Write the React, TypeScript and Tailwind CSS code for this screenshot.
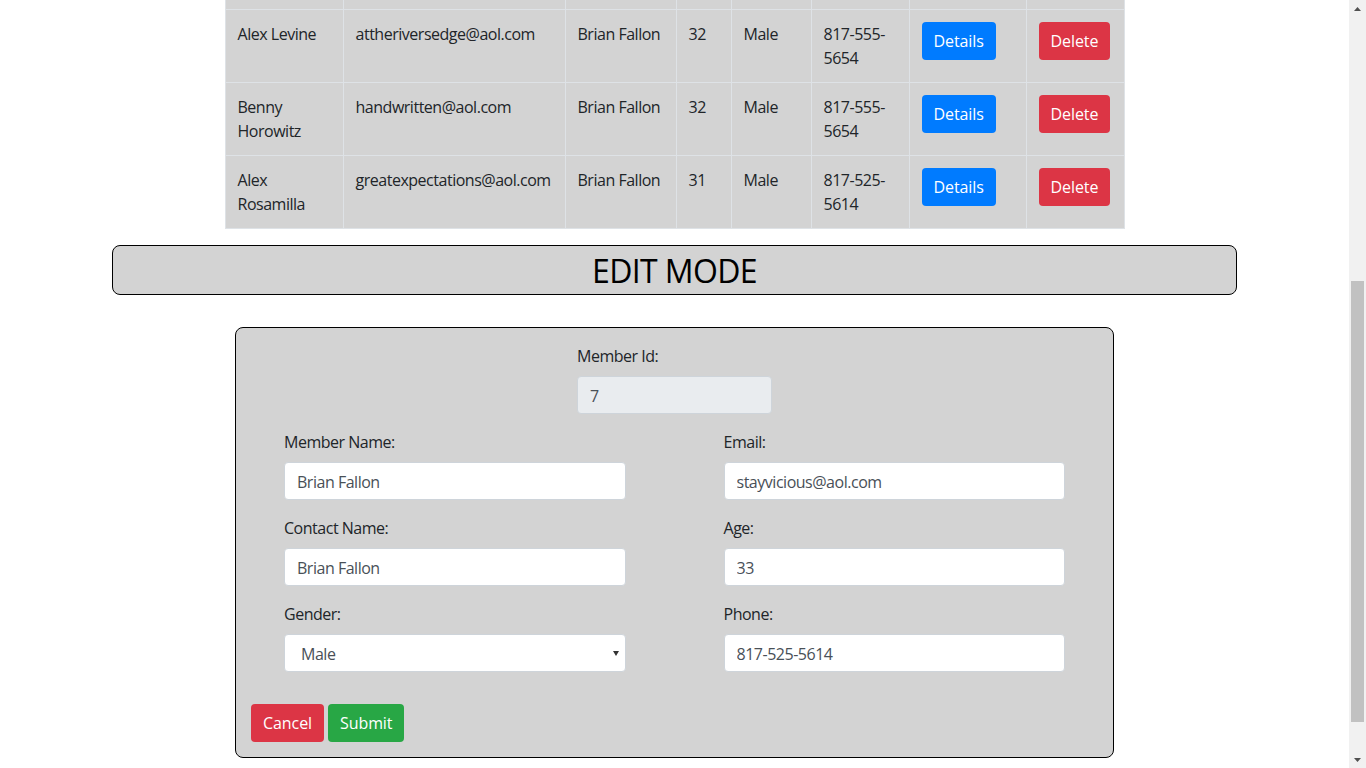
import { useLayoutEffect, useRef } from 'react';

interface Member {
  id: number;
  name: string;
  email: string;
  contact: string;
  age: number;
  gender: string;
  phone: string;
}

const members: Member[] = [
  { id: 1, name: 'Brian Fallon', email: 'stayvicious@aol.com', contact: 'Brian Fallon', age: 33, gender: 'Male', phone: '817-525-5614' },
  { id: 2, name: 'Ian Perkins', email: 'fiftyfive@aol.com', contact: 'Brian Fallon', age: 34, gender: 'Male', phone: '817-555-5614' },
  { id: 3, name: 'Jared Hart', email: 'sinkorswim@aol.com', contact: 'Brian Fallon', age: 31, gender: 'Male', phone: '817-555-5600' },
  { id: 4, name: 'Tony Perkins', email: 'cassidy@aol.com', contact: 'Brian Fallon', age: 30, gender: 'Male', phone: '817-525-5654' },
  { id: 5, name: 'Alex Levine', email: 'attheriversedge@aol.com', contact: 'Brian Fallon', age: 32, gender: 'Male', phone: '817-555-5654' },
  { id: 6, name: 'Benny Horowitz', email: 'handwritten@aol.com', contact: 'Brian Fallon', age: 32, gender: 'Male', phone: '817-555-5654' },
  { id: 7, name: 'Alex Rosamilla', email: 'greatexpectations@aol.com', contact: 'Brian Fallon', age: 31, gender: 'Male', phone: '817-525-5614' },
];

const cell = 'border border-[#dee2e6] p-3 align-top';
const control =
  'block h-[38px] w-full rounded-[4px] border border-[#ced4da] px-3 pt-px text-base tracking-[-0.03em] text-[#495057] outline-none';
const btn = 'h-[38px] rounded-[4px] px-3 tracking-[-0.005em] text-white';

const Field = ({ label, value }: { label: string; value: string }) => (
  <div className="mb-4">
    <label className="mb-2 block">{label}</label>
    <input className={`${control} bg-white`} defaultValue={value} />
  </div>
);

// windows-style scrollbar, drawn since the headless page hides the real one
const ScrollBar = () => (
  <div className="flex w-[17px] shrink-0 flex-col bg-[#f1f1f1]">
    <div className="flex h-[17px] items-center justify-center">
      <svg width="7" height="4" viewBox="0 0 7 4">
        <path d="M0 4L3.5 0 7 4z" fill="#505050" />
      </svg>
    </div>
    <div className="flex-1 px-[2px]">
      <div className="mt-[264px] h-[441px] bg-[#c1c1c1]" />
    </div>
    <div className="flex h-[17px] items-center justify-center">
      <svg width="7" height="4" viewBox="0 0 7 4">
        <path d="M0 0h7L3.5 4z" fill="#505050" />
      </svg>
    </div>
  </div>
);

const App = () => {
  const scroller = useRef<HTMLDivElement>(null);

  // page is shown scrolled to the bottom
  useLayoutEffect(() => {
    if (scroller.current) scroller.current.scrollTop = scroller.current.scrollHeight;
  }, []);

  return (
    <div
      className="flex h-screen bg-white text-base leading-6 tracking-[-0.03em] text-[#212529]"
      style={{ fontFamily: '"Open Sans", "Noto Sans", sans-serif' }}
    >
      <div
        ref={scroller}
        className="flex-1 overflow-y-scroll [scrollbar-width:none] [&::-webkit-scrollbar]:hidden"
      >
        <div className="pt-4">
          <div className="mx-auto flex h-[50px] w-[1125px] items-center justify-center rounded-lg border border-black bg-[#d3d3d3]">
            <h2 className="text-[32px] leading-[1.2] tracking-[-0.02em]">MEMBER LIST</h2>
          </div>

          <table className="mx-auto mt-8 w-[899px] table-fixed border-collapse bg-[#d3d3d3]">
            <colgroup>
              <col className="w-[118px]" />
              <col className="w-[222px]" />
              <col className="w-[111px]" />
              <col className="w-[55px]" />
              <col className="w-[80px]" />
              <col className="w-[98px]" />
              <col className="w-[117px]" />
              <col className="w-[98px]" />
            </colgroup>
            <thead>
              <tr className="text-left">
                <th className={cell}>Name</th>
                <th className={cell}>Email</th>
                <th className={cell}>Contact</th>
                <th className={cell}>Age</th>
                <th className={cell}>Gender</th>
                <th className={cell}>Phone</th>
                <th className={cell}></th>
                <th className={cell}></th>
              </tr>
            </thead>
            <tbody>
              {members.map((m) => (
                <tr key={m.id}>
                  <td className={cell}>{m.name}</td>
                  <td className={cell}>{m.email}</td>
                  <td className={cell}>{m.contact}</td>
                  <td className={cell}>{m.age}</td>
                  <td className={cell}>{m.gender}</td>
                  <td className={cell}>{m.phone}</td>
                  <td className={cell}>
                    <button className={`${btn} bg-[#007bff]`}>Details</button>
                  </td>
                  <td className={cell}>
                    <button className={`${btn} bg-[#dc3545]`}>Delete</button>
                  </td>
                </tr>
              ))}
            </tbody>
          </table>

          <div className="mx-auto mt-4 flex h-[50px] w-[1125px] items-center justify-center rounded-lg border border-black bg-[#d3d3d3] pt-0.5">
            <h2 className="text-[32px] leading-[1.2] tracking-[-0.02em] text-black">EDIT MODE</h2>
          </div>

          <form className="mx-auto mt-8 mb-[10px] w-[879px] rounded-lg border border-black bg-[#d3d3d3] px-[15px] pt-4 pb-[15px]">
            <div className="mb-4 flex justify-center">
              <div className="w-[195px]">
                <label className="mb-2 block">Member Id:</label>
                <input className={`${control} bg-[#e9ecef]`} defaultValue="7" disabled />
              </div>
            </div>

            <div className="grid grid-cols-2 gap-x-[98px] px-[33px]">
              <Field label="Member Name:" value="Brian Fallon" />
              <Field label="Email:" value="stayvicious@aol.com" />
              <Field label="Contact Name:" value="Brian Fallon" />
              <Field label="Age:" value="33" />
              <div className="mb-4">
                <label className="mb-2 block">Gender:</label>
                <div className="relative">
                  <select className={`${control} appearance-none bg-white pl-4`} defaultValue="Male">
                    <option>Male</option>
                    <option>Female</option>
                  </select>
                  <svg className="pointer-events-none absolute top-[17px] right-[7px] h-[5px] w-[6px]" viewBox="0 0 6 5">
                    <path d="M0 0h6L3 5z" fill="#333" />
                  </svg>
                </div>
              </div>
              <Field label="Phone:" value="817-525-5614" />
            </div>

            <div className="mt-4 flex gap-1">
              <button type="button" className={`${btn} bg-[#dc3545]`}>Cancel</button>
              <button type="button" className={`${btn} bg-[#28a745]`}>Submit</button>
            </div>
          </form>
        </div>
      </div>
      <ScrollBar />
    </div>
  );
};

export default App;
